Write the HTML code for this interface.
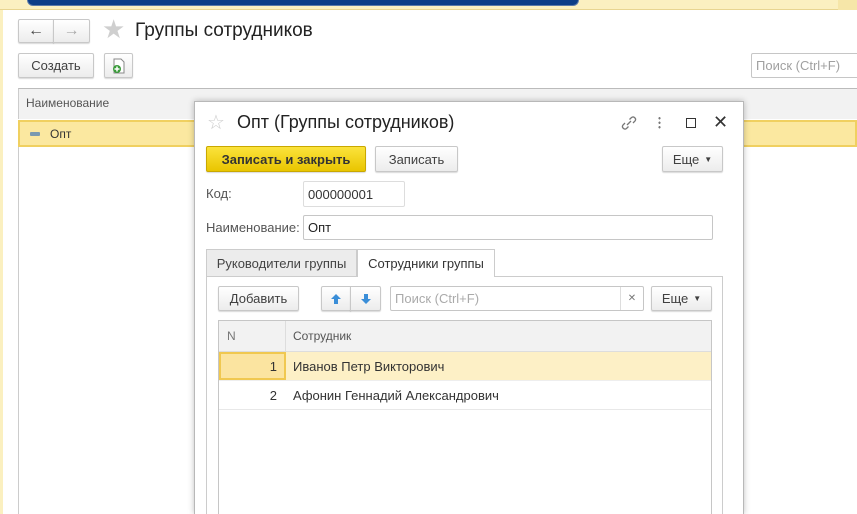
<!DOCTYPE html>
<html style="width:857px;height:514px;overflow:hidden"><head><meta charset="utf-8"><style>
*{box-sizing:border-box;margin:0;padding:0}
body{width:857px;height:514px;overflow:hidden;background:#fff;font-family:"Liberation Sans",Arial,sans-serif;font-size:13px;color:#333;position:relative}
.a{position:absolute}
.btn{position:absolute;border:1px solid #c8c8c8;border-radius:2px;background:linear-gradient(#fff,#ececec);box-shadow:0 1px 1px rgba(0,0,0,.15);display:flex;align-items:center;justify-content:center;font-size:13px;color:#404040}
.inp{position:absolute;border:1px solid #c6c6c6;border-radius:2px;background:#fff;font-size:13px;padding-left:4px;display:flex;align-items:center}
</style></head><body>
<div class="a" style="left:0;top:0;width:857px;height:10px;background:#fbf0c0;border-bottom:1px solid #e8d590"></div>
<div class="a" style="left:27px;top:0;width:552px;height:6px;background:#0c3d87;border-radius:0 0 8px 8px;border:1px solid #5b79a8;border-top:none"></div>
<div class="a" style="left:0;top:10px;width:3px;height:504px;background:#fbf0c0"></div>
<div class="a" style="left:838px;top:0;width:19px;height:10px;background:#f6e6a8"></div>

<div class="btn" style="left:18px;top:19px;width:36px;height:24px;border-radius:2px 0 0 2px;font-size:16px;color:#444">&#8592;</div>
<div class="btn" style="left:53px;top:19px;width:37px;height:24px;border-radius:0 2px 2px 0;font-size:16px;color:#aaa">&#8594;</div>
<div class="a" style="left:102px;top:14px;font-size:26px;color:#cfcfcf">&#9733;</div>
<div class="a" style="left:135px;top:20px;font-size:19px;color:#222">Группы сотрудников</div>
<div class="btn" style="left:18px;top:53px;width:76px;height:25px">Создать</div>
<div class="btn" style="left:104px;top:53px;width:29px;height:25px"><svg width="14" height="16"><path d="M2 1h7l3 3v11H2z" fill="#fff" stroke="#888"/><circle cx="5" cy="11" r="4" fill="#3a9b3a"/><path d="M5 8.5v5M2.5 11h5" stroke="#fff" stroke-width="1.5"/></svg></div>
<div class="inp" style="left:751px;top:53px;width:110px;height:25px;color:#a0a0a0">Поиск (Ctrl+F)</div>
<div class="a" style="left:18px;top:88px;width:839px;height:31px;background:#f2f2f2;border-top:1px solid #bbb;border-left:1px solid #ccc"></div>
<div class="a" style="left:26px;top:96px;color:#555;font-size:12px">Наименование</div>
<div class="a" style="left:18px;top:120px;width:839px;height:27px;background:#fbe8a0;border:2px solid #f0d060"></div>
<div class="a" style="left:30px;top:132px;width:10px;height:4px;background:#7a9ab0;border-radius:1px"></div>
<div class="a" style="left:50px;top:127px;font-size:12px;color:#333">Опт</div>
<div class="a" style="left:18px;top:147px;width:1px;height:367px;background:#ccc"></div>

<div class="a" style="left:194px;top:101px;width:550px;height:413px;background:#fff;border:1px solid #b8b8b8;border-bottom:none;box-shadow:0 0 6px rgba(0,0,0,.25)"></div>
<div class="a" style="left:207px;top:110px;font-size:20px;color:#ccc">&#9734;</div>
<div class="a" style="left:237px;top:112px;font-size:18px;color:#222">Опт (Группы сотрудников)</div>
<svg class="a" style="left:620px;top:114px" width="18" height="18"><path d="M7 11l4-4M5 9l-2 2a2.5 2.5 0 003.5 3.5l2-2M13 9l2-2a2.5 2.5 0 00-3.5-3.5l-2 2" fill="none" stroke="#777" stroke-width="1.3"/></svg>
<div class="a" style="left:658px;top:116px;width:3px;height:14px;background:radial-gradient(circle,#777 1px,transparent 1.3px) 0 0/3px 4.5px"></div>
<div class="a" style="left:686px;top:118px;width:10px;height:10px;border:1.5px solid #333"></div>
<div class="a" style="left:713px;top:112px;font-size:18px;color:#333">&#10005;</div>
<div class="btn" style="left:206px;top:146px;width:160px;height:26px;background:linear-gradient(#fbe33c,#e9c500);border-color:#c9a800;font-weight:bold;color:#333">Записать и закрыть</div>
<div class="btn" style="left:375px;top:146px;width:83px;height:26px">Записать</div>
<div class="btn" style="left:662px;top:146px;width:61px;height:26px">Еще <span style="font-size:8px;margin-left:5px">&#9660;</span></div>
<div class="a" style="left:206px;top:186px;color:#555">Код:</div>
<div class="inp" style="left:303px;top:181px;width:102px;height:26px;border-color:#ddd">000000001</div>
<div class="a" style="left:206px;top:220px;color:#555">Наименование:</div>
<div class="inp" style="left:303px;top:215px;width:410px;height:25px;color:#222">Опт</div>
<div class="a" style="left:206px;top:249px;width:151px;height:28px;background:#ececec;border:1px solid #ccc;display:flex;align-items:center;justify-content:center;color:#444">Руководители группы</div>
<div class="a" style="left:206px;top:276px;width:517px;height:250px;border:1px solid #ccc"></div>
<div class="a" style="left:357px;top:249px;width:138px;height:28px;background:#fff;border:1px solid #ccc;border-bottom:none;display:flex;align-items:center;justify-content:center;color:#333">Сотрудники группы</div>
<div class="btn" style="left:218px;top:286px;width:81px;height:25px">Добавить</div>
<div class="btn" style="left:321px;top:286px;width:30px;height:25px;border-radius:2px 0 0 2px"><svg width="12" height="12"><path d="M6 1L1 6h3v5h4V6h3z" fill="#3a8ed8"/></svg></div>
<div class="btn" style="left:350px;top:286px;width:31px;height:25px;border-radius:0 2px 2px 0"><svg width="12" height="12"><path d="M6 11L1 6h3V1h4v5h3z" fill="#3a8ed8"/></svg></div>
<div class="inp" style="left:390px;top:286px;width:254px;height:25px;color:#aaa">Поиск (Ctrl+F)</div>
<div class="a" style="left:620px;top:287px;width:23px;height:23px;border-left:1px solid #ddd;display:flex;align-items:center;justify-content:center;font-size:10px;color:#777">&#10005;</div>
<div class="btn" style="left:651px;top:286px;width:61px;height:25px">Еще <span style="font-size:8px;margin-left:5px">&#9660;</span></div>
<div class="a" style="left:218px;top:320px;width:494px;height:200px;border:1px solid #c6c6c6"></div>
<div class="a" style="left:219px;top:321px;width:492px;height:31px;background:#f2f2f2;border-bottom:1px solid #ddd"></div>
<div class="a" style="left:285px;top:321px;width:1px;height:31px;background:#ddd"></div>
<div class="a" style="left:227px;top:329px;color:#777;font-size:12px">N</div>
<div class="a" style="left:293px;top:329px;color:#555;font-size:12px">Сотрудник</div>
<div class="a" style="left:219px;top:352px;width:492px;height:29px;background:#fdf0c6;border-bottom:1px solid #eee"></div>
<div class="a" style="left:219px;top:352px;width:67px;height:28px;background:#fbe4a0;border:2px solid #f0c850"></div>
<div class="a" style="left:219px;top:359px;width:58px;text-align:right;color:#333">1</div>
<div class="a" style="left:293px;top:359px;color:#333">Иванов Петр Викторович</div>
<div class="a" style="left:219px;top:381px;width:492px;height:29px;border-bottom:1px solid #e8e8e8"></div>
<div class="a" style="left:219px;top:388px;width:58px;text-align:right;color:#333">2</div>
<div class="a" style="left:293px;top:388px;color:#333">Афонин Геннадий Александрович</div>
</body></html>
